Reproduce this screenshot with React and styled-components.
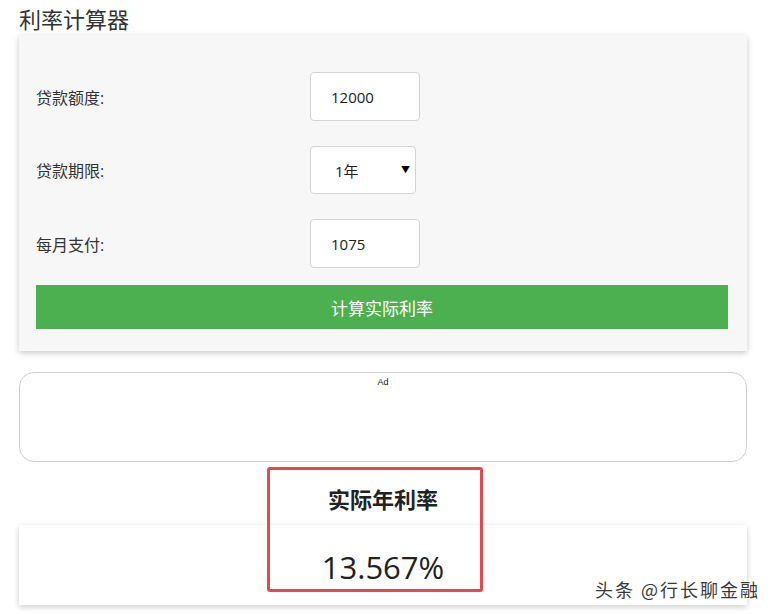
import React from "react";
import styled, { createGlobalStyle } from "styled-components";

const Global = createGlobalStyle`
  html, body { margin: 0; padding: 0; background: #fff; }
  body { font-family: "Open Sans", "Noto Sans CJK SC", sans-serif; color: #333; }
  * { box-sizing: border-box; }
`;

const Page = styled.div`
  position: relative;
  width: 775px;
  height: 614px;
  overflow: hidden;
  padding-left: 19px;
`;

const Column = styled.div`
  width: 728px;
  display: flex;
  flex-direction: column;
`;

const Title = styled.h1`
  margin: 0 0 3px;
  padding-top: 6px;
  font-size: 22px;
  line-height: 26px;
  font-weight: 400;
  color: #333;
`;

const Card = styled.div`
  background: #f7f7f7;
  box-shadow: 0 2px 6px rgba(0, 0, 0, 0.22);
  padding: 37px 19px 22px 17px;
  display: flex;
  flex-direction: column;
  gap: 25px;
`;

const Row = styled.div`
  display: flex;
  align-items: center;
`;

const Label = styled.label`
  flex: 0 0 274px;
  font-size: 16px;
  color: #333;
`;

const Field = styled.div`
  width: ${(p) => p.$w}px;
  height: ${(p) => p.$h}px;
  background: #fff;
  border: 1px solid #d4d4d4;
  border-radius: 4px;
  display: flex;
  align-items: center;
  padding-left: ${(p) => p.$pl}px;
  font-size: 15px;
  color: #222;
  position: relative;
`;

const Arrow = styled.span`
  position: absolute;
  right: 5px;
  top: 50%;
  transform: translateY(-55%);
  font-size: 9px;
  color: #000;
`;

const Button = styled.button`
  margin-top: -8px;
  height: 44px;
  width: 100%;
  border: none;
  background: #4caf50;
  color: #fff;
  font-family: "Open Sans", "Noto Sans CJK SC", sans-serif;
  font-size: 17px;
  cursor: pointer;
`;

const AdBox = styled.div`
  margin-top: 21px;
  height: 90px;
  border: 1px solid #cfcfcf;
  border-radius: 15px;
  display: flex;
  justify-content: center;
  padding-top: 4px;
  font-family: "Liberation Sans", Arial, sans-serif;
  font-size: 9px;
  color: #222;
`;

const ResultTitle = styled.h2`
  margin: 22px 0 11px;
  text-align: center;
  font-size: 22px;
  line-height: 30px;
  font-weight: 700;
  color: #222;
`;

const ResultCard = styled.div`
  height: 80px;
  background: #fff;
  box-shadow: 0 2px 6px rgba(0, 0, 0, 0.2);
  display: flex;
  justify-content: center;
  align-items: center;
  padding-top: 3px;
  font-size: 31px;
  color: #222;
`;

const Highlight = styled.div`
  position: absolute;
  left: 267px;
  top: 467px;
  width: 216px;
  height: 125px;
  border: 3px solid #e5484d;
  border-radius: 3px;
  pointer-events: none;
`;

const Watermark = styled.div`
  position: absolute;
  left: 595px;
  top: 577px;
  font-size: 18px;
  line-height: 24px;
  letter-spacing: 2px;
  color: #3a3a3a;
  white-space: nowrap;
  text-shadow: 1px 1px 0 #fff, -1px -1px 0 #fff, 1px -1px 0 #fff, -1px 1px 0 #fff;
  font-family: "Noto Sans CJK SC", sans-serif;
`;

export default function App() {
  return (
    <Page>
      <Global />
      <Column>
        <Title>利率计算器</Title>
        <Card>
          <Row>
            <Label>贷款额度:</Label>
            <Field $w={110} $h={49} $pl={20}>12000</Field>
          </Row>
          <Row>
            <Label>贷款期限:</Label>
            <Field $w={106} $h={48} $pl={24}>
              1年
              <Arrow>▼</Arrow>
            </Field>
          </Row>
          <Row>
            <Label>每月支付:</Label>
            <Field $w={110} $h={49} $pl={20}>1075</Field>
          </Row>
          <Button>计算实际利率</Button>
        </Card>
        <AdBox>Ad</AdBox>
        <ResultTitle>实际年利率</ResultTitle>
        <ResultCard>13.567%</ResultCard>
      </Column>
      <Highlight />
      <Watermark>头条 @行长聊金融</Watermark>
    </Page>
  );
}
